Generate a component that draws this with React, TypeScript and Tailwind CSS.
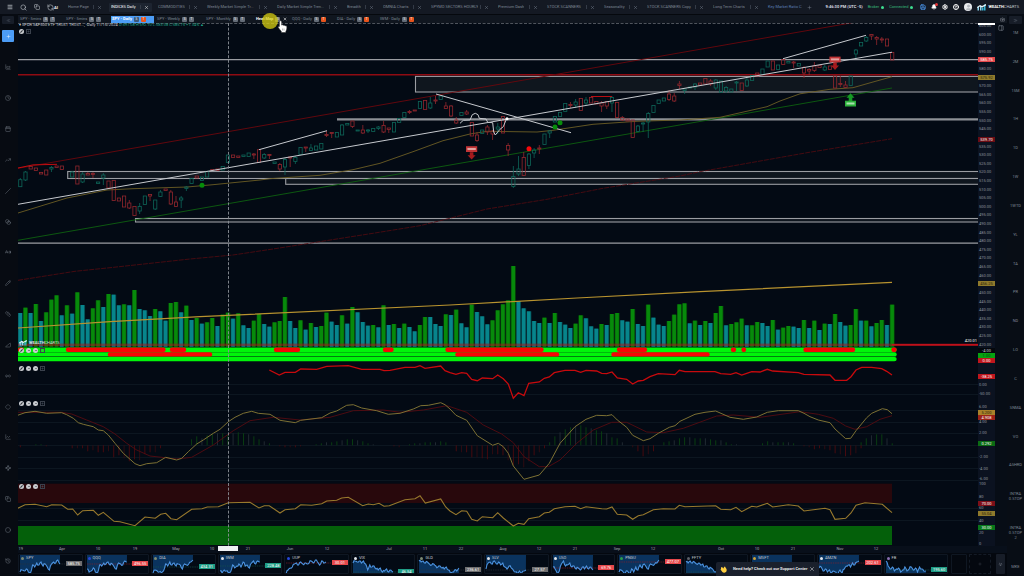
import React from 'react';
import {
  Menu, Search, Copy, RefreshCcw, X, Plus, Save, Bell, Settings, CircleHelp, User, ChevronsLeft, ChevronsRight,
  ChartArea, Clock, Calendar, TrendingUp, Slash, Blend, CaseSensitive, Pencil, Ruler, TriangleRight, Infinity as Loop, Diamond,
  ChartLine, Waypoints, Circle, History, PanelRight, Camera, ChevronsDown,
} from 'lucide-react';

type Pt = [number, number];

const STEP = 5.19;
const barX = (i: number) => 20.3 + i * STEP;

const trace = (segments: { x: number; y: number; pts: number[] }[]) =>
  segments
    .flatMap((s) => {
      const out: string[] = [];
      for (let i = 0; i < s.pts.length; i += 2) {
        out.push(`${(s.x + s.pts[i] / 3).toFixed(1)},${(s.y + s.pts[i + 1] / 3).toFixed(1)}`);
      }
      return out;
    })
    .join(' ');

/* ---------- volume: T = teal, G = green ---------- */
const VOLUME =
  '174T 158G 174T 147G 198T 172G 134G 121G 181T 151G 176T 112G 150T 193T 160G 136G 156T 117G 119T 151T 148G 151T 105G 162T 166T 183T 162G 169T 197T 144G 141G 172T 152G 195T 189G 206T 202G 189G 213T 179G 173G 191T 175G 211T 219T 197G 177G 207T 215T 202G 198G 126G 198T 219T 196G 224T 204G 216T 213G 173G 200T 210T 181G 206T 156G 172T 201T 212T 210G 217T 151G 210T 207G 219T 206G 216T 229T 210G 186G 186T 207T 213T 178G 180T 164G 205T 217T 149G 171T 184T 208T 196G 166G 148G 136G 33G 138T 160T 169T 198T 204T 188G 204T 174G 201T 209T 219T 206G 181G 190T 214T 221T 207G 210T 177G 174G 196T 200T 162G 207T 213T 149G 188T 209T 213T 198G 179G 148G 145G 205T 197G 210T 198G 204T 174G 153G 211T 207G 202G 191G 211T 211G 201G 204T 213T 195G 224T 218G 213G 215T 219T 195G 219T 197G 225T 206G 207T 177G 201T 212T 210G 162G 197T 197G 214T 204G 195G 210T 149G'
    .split(' ')
    .map((v) => ({ top: 255 + parseInt(v, 10) / 3, teal: v.endsWith('T') }));

/* ---------- candles: index, open/close band, high, low ---------- */
const CANDLES = `0G 179.7 186.7 178 187;1G 172 180 171 181;2R 166.5 169;3R 168 170.5;4R 172.5 174;5R 170 175;6G 167.5 169 166 172;7R 166 167.5;8R 166 169.5;10G 172 177 171 177;11R 166 184;12G 174 182 172 183;13R 173.5 175 172 175;14R 173.5 174.5 172 178;15G 182 183.5;16G 175 178 173 185;17R 181 188;18R 180.5 200.5;19R 198 201;20R 196 207;21R 203 208 200 209;22R 206.5 215.5;23G 206.5 211 203 214;24G 196 204.5;25R 194.5 196 194 201;26G 200 209 200 210;27G 192 196.5 190 197;28R 189 190.5;29R 192 204 190 205;30R 202 206.5 196 207;31G 198 200 196 208;32G 187 188.5 186 191;33G 178.5 183.5;34R 176 178;35G 177 180.5;36G 171.5 177;37R 169.5 170.5;38R 169 170.5;39G 166.5 170;40G 155 162.5;41R 155 157.5;42R 156 157.5;43G 155 156.5;44G 153 156.5;45R 154 155 153 159;46R 149.7 162.3;47G 154.5 158 153 159;48R 154.5 155.5 154 159;49G 162 163.5;50R 164.5 169 163 171;51G 159.5 167 158 175;52R 157 158 157 167;53G 157.5 161.5 156 164;54G 147.5 154.5;55R 147 148 147 152;56G 148 150.5 144 151;57G 146 150;58G 143.5 149;59R 134.5 135.5 131 137;60R 132.5 133.5 132 138;61G 132.5 137;62G 125 135 124 135;63G 123.5 125;64R 121 126.5 121 128;65G 130 131;66R 130 133 125 134;67G 130 131 129 133;68G 128.5 131.5;69G 127 128.5 126 130;70R 125.5 132 121 133;71R 128 129.5 128 133;72G 122.5 132;73G 118.5 122.5;74G 112.5 117.5;75R 111.5 112.5 110 114;76R 110 111;77G 101.5 108.5;78R 100.5 109.5;79G 103 108 97 109;80R 100 101 96 104;81G 96 99.5;82R 106 108.5 102 109;83R 106 116 105 117;84R 120 123 117 124;85G 112.5 115.5;86R 112 114 110 115;87R 122.5 136;88R 135 140.5 132 142;89G 130 133.5;90R 127 132 125 135;91R 131 134 130 140;92G 127 129 123 134;93R 116.5 133;94R 145.5 150 143 156;95G 176.5 186.5 166 188;96G 169 174 156 176;97R 157.5 175.5 152 176;98G 154 165.5 153 169;99G 150 153 148 158;100R 148 149 145 154;101G 134 144.5;102G 131 133 130 138;103G 116.5 122;104G 112.5 116.5;105G 103.5 111.5;106R 104.5 105.5 102 108;107G 102 105 99 108;108R 98.5 110.5;109G 100 103 97 105;110R 97.5 103;111R 101.5 104;112R 103 106 101 112;113R 101.5 106 101 109;114G 97.5 103 96 112;115R 102.5 117.5;116R 117.5 120 116 121;117R 119 121;118R 120 137.5;119G 126 131.5 125 132;120G 123 124 122 132;121G 113.5 122 112 138;122G 105.5 112.5;123G 100 103.5;124G 98 101;125R 94 99.5 90 101;126R 96 101 93 102;127R 84 85.5 81 89;128G 89 90.5 88 94;129G 87 88;130G 84 87 83 90;131R 83 85;132R 78.5 84;133R 81 84 79 86;134G 80 88 79 90;135G 81 92.5;136G 87.5 91 86 93;137G 89 92;138G 82 83 81 91;139R 83 90.5;140G 80 86 78 87;141G 75.5 80.5;142R 73 76;143G 69 74.5;144G 61 67;145R 61 70;146G 65 69.5;147R 59.5 64.5;148G 61.5 63;149R 62 63 61 68;150G 63.5 66;151R 67.5 73 66 78;152R 69.5 71 68 75;153R 66 70.5 62 72;154R 65.5 67.5;155G 67 70 65 71;156R 66 69.5;157R 76 88;158R 83.5 84.5 76 87;159R 85 87.5 81 88;160G 76 85.5;161G 50 54 49 59;162G 42.5 46;163G 37.5 41 36 42;164R 34.5 36 34 40;165R 37.5 39 36 45;166R 39 40 37 43;167R 39 46;168R 52.5 60`
  .split(';')
  .map((row) => {
    const [id, ...v] = row.split(' ');
    const n = v.map(Number);
    return { i: parseInt(id, 10), up: id.endsWith('G'), top: n[0], bottom: n[1], high: n[2] ?? n[0], low: n[3] ?? n[1] };
  });

const AVG_FAST = '18,213 67,198 107,190 133,188.7 187,187 213,184.7 260,180 270,178.7 320,175.3 353,169.7 380,163.3 413,151.7 443,140.7 470,134 487,131.3 537,132 553,130.3 593,124.3 637,121.3 680,120 720,117.3 767,106.7 780,101 800,93.8 830,89.3 853,87.7 873,82 892,76.7';
const LOWER_BAND = '18,280.3 75,271.3 110,267.7 190,259 233,255 273,249 373,233.3 420,225.7 487,209 547,199.3 603,188.3 680,176 700,171.7 807,152.7 892,138.7';
const AVG_SLOW = '18,328 110,321.7 200,316.7 450,305 577,298 700,291.7 892,282.3';

const MOMENTUM = trace([
  { x: 0, y: 360, pts: [808, 30, 838, 45, 855, 37, 886, 37, 902, 27, 950, 28, 980, 19, 1045, 17, 1085, 28, 1140, 28, 1152, 32, 1170, 31, 1215, 22, 1245, 22, 1260, 17, 1275, 25, 1322, 18, 1335, 32] },
  { x: 450, y: 360, pts: [0, 38, 18, 43, 35, 38, 50, 40, 65, 58, 82, 62, 97, 54, 128, 56, 143, 45, 160, 56, 175, 72, 190, 115, 205, 98, 222, 107, 236, 70, 268, 66, 283, 55, 298, 51, 313, 38, 345, 31, 375, 31, 392, 37, 408, 31, 440, 33, 455, 40, 470, 41, 486, 36, 502, 54, 530, 58, 548, 72, 565, 63, 580, 61, 600, 50, 625, 41, 675, 44, 688, 31, 705, 35, 795, 35, 812, 41, 842, 43, 858, 38, 875, 45, 890, 40, 905, 35, 930, 36, 952, 28, 968, 33, 1045, 38, 1062, 43, 1140, 45, 1155, 61, 1190, 61, 1203, 50, 1218, 30, 1235, 22, 1265, 22, 1295, 26, 1310, 34, 1326, 45] },
]);

const MACD = trace([
  { x: 0, y: 360, pts: [53, 166, 75, 158, 105, 154, 140, 160, 185, 158, 200, 164, 220, 175, 235, 188, 250, 193, 280, 200, 295, 210, 310, 212, 325, 225, 345, 250, 370, 280, 405, 311, 420, 317, 440, 311, 470, 308, 497, 292, 530, 300, 545, 295, 565, 275, 590, 252, 610, 240, 640, 220, 660, 208, 685, 185, 705, 172, 730, 160, 755, 154, 775, 160, 810, 163, 840, 181, 886, 188, 902, 181, 965, 173, 990, 159, 1010, 153, 1040, 136, 1060, 134, 1085, 144, 1130, 152, 1165, 163, 1200, 160, 1240, 147, 1262, 137, 1285, 136, 1322, 128, 1335, 134] },
  { x: 450, y: 360, pts: [0, 147, 18, 166, 50, 181, 82, 227, 128, 256, 145, 250, 160, 260, 175, 280, 190, 318, 222, 358, 268, 345, 298, 310, 330, 250, 375, 200, 408, 178, 440, 166, 470, 167, 486, 164, 502, 180, 530, 202, 548, 226, 580, 242, 600, 236, 625, 220, 658, 202, 675, 197, 690, 184, 735, 163, 765, 157, 797, 153, 840, 172, 880, 178, 920, 171, 952, 157, 985, 152, 1045, 152, 1062, 160, 1080, 170, 1105, 180, 1140, 188, 1155, 207, 1187, 236, 1202, 235, 1218, 212, 1250, 173, 1265, 160, 1297, 146, 1312, 149, 1326, 161] },
]);

const SIGNAL = trace([
  { x: 0, y: 360, pts: [53, 157, 185, 157, 215, 162, 260, 180, 310, 200, 345, 222, 380, 250, 410, 270, 450, 288, 530, 297, 575, 292, 640, 255, 700, 212, 750, 182, 820, 172, 900, 180, 990, 172, 1060, 152, 1150, 150, 1200, 157, 1270, 150, 1340, 137] },
  { x: 450, y: 360, pts: [0, 140, 50, 157, 100, 195, 155, 222, 190, 248, 222, 290, 268, 320, 295, 320, 330, 300, 380, 250, 430, 210, 485, 187, 530, 187, 590, 216, 640, 218, 700, 205, 800, 168, 850, 165, 930, 172, 1050, 155, 1105, 163, 1150, 175, 1187, 198, 1215, 208, 1250, 200, 1290, 178, 1326, 167] },
]);

const RSI = trace([
  { x: 0, y: 360, pts: [53, 445, 75, 434, 105, 433, 140, 440, 155, 434, 185, 435, 203, 448, 218, 447, 233, 465, 248, 452, 280, 451, 295, 466, 310, 457, 342, 484, 360, 485, 405, 497, 435, 471, 466, 475, 482, 463, 497, 460, 513, 476, 530, 479, 575, 448, 606, 446, 622, 441, 655, 440, 685, 428, 750, 427, 777, 444, 793, 437, 808, 437, 840, 459, 855, 449, 886, 446, 902, 434, 935, 436, 965, 431, 980, 423, 1010, 421, 1025, 414, 1045, 412, 1088, 437, 1105, 432, 1120, 434, 1137, 430, 1152, 439, 1168, 437, 1215, 419, 1245, 416, 1260, 407, 1276, 429, 1322, 417, 1337, 441] },
  { x: 450, y: 360, pts: [0, 453, 18, 464, 35, 452, 50, 454, 65, 478, 82, 483, 97, 470, 128, 473, 143, 458, 160, 474, 190, 498, 205, 490, 222, 493, 236, 476, 268, 470, 283, 459, 298, 457, 313, 446, 345, 440, 375, 439, 392, 446, 408, 440, 455, 446, 470, 447, 486, 441, 502, 463, 530, 465, 548, 478, 565, 467, 580, 464, 610, 449, 640, 446, 675, 447, 688, 436, 705, 440, 797, 437, 812, 448, 842, 449, 858, 442, 875, 455, 890, 447, 905, 439, 920, 441, 952, 430, 968, 441, 1015, 434, 1045, 438, 1062, 453, 1125, 445, 1140, 449, 1155, 478, 1187, 475, 1203, 459, 1218, 436, 1245, 428, 1297, 433, 1326, 458] },
]);

const SCRIBBLE = trace([{ x: 420, y: 70, pts: [120, 160, 130, 151, 150, 150, 157, 134, 166, 130, 174, 134, 178, 145, 198, 147, 203, 157, 218, 158, 221, 186, 226, 195, 240, 178, 250, 170, 258, 150, 262, 146] }]);

/* histogram: first bar index, then heights in px (negative hangs below zero) */
const HISTOGRAM: { start: number; h: number[] }[] = [
  { start: 0, h: [-2, 0, 0, 1, 1, -1] },
  { start: 10, h: [-3, -3, -3, -6, -5, -7, -7, -6, -12, -10, -13, -16, -14, -15, -9, -7, -7, -3] },
  { start: 33, h: [6, 9, 7, 10, 11, 12, 12, 11, 12, 13, 12, 11, 9, 6, 4, 2, 0, -1, -2, -2, -2, -1] },
  { start: 57, h: [1, 2, 3, 3, 4, 5, 6, 6, 5, 4, 2, 1, 0, 0, 0, -1, -2] },
  { start: 75, h: [1, 2, 2, 3, 3, 3, 4, 3] },
  { start: 84, h: [-6, -7, -7, -12, -12, -13, -14, -9, -9, -10, -15, -20, -19, -22, -16, -10, -7, -3] },
  { start: 102, h: [3, 9, 13, 16, 18, 19, 20, 18, 17, 15, 14, 12, 8, 7, 3, 0, -2, -6, -11, -9, -6] },
  { start: 124, h: [3, 4, 5, 7, 8, 8, 7, 7, 7, 6, 5, 5, 3, 1, 1] },
  { start: 143, h: [2, 4, 3, 3, 3, 3, 2] },
  { start: 151, h: [-1, -2, -4, -3, -4, -5, -8, -9, -11, -10, -8, -3] },
  { start: 162, h: [3, 7, 10, 11, 11, 7, 2] },
];

const STRIP_ONE: Pt[] = [[18, 24], [66, 165.5], [170, 186], [274, 300], [383, 393.5], [445.5, 543.5], [617, 647], [731, 736], [741.5, 746], [803.5, 855], [891.5, 896.5]];
const STRIP_TWO: Pt[] = [[108, 212], [455.5, 559], [611.5, 709.5]];

function Signal({ x, y, up = false }: { x: number; y: number; up?: boolean }) {
  return up ? (
    <g transform={`translate(${x} ${y})`} fill="#159a25">
      <path d="M0 0l4 4.4H1.8V8h-3.6V4.400H-4z" />
      <rect x="-5.5" y="7.4" width="11" height="5.8" fill="#2bb03a" />
      <rect x="-4" y="9.2" width="8" height="2" fill="#a9e0ae" />
    </g>
  ) : (
    <g transform={`translate(${x} ${y})`} fill="#a51a1d">
      <rect x="-5.6" y="0" width="11.2" height="5.8" fill="#c03436" />
      <rect x="-4.2" y="1.8" width="8.4" height="2" fill="#e3a3a1" />
      <path d="M0 13.4L4 9H1.8V6h-3.6v3H-4z" />
    </g>
  );
}

function MarketChart() {
  return (
    <svg className="block h-full w-full" viewBox="18 23 960 523" preserveAspectRatio="none" role="img" aria-label="SPY daily chart">
      <g stroke="#0c1620">
        {[384, 394, 410, 422, 433, 445, 457, 468, 480, 508, 520].map((y) => (
          <line key={y} x1="18" x2="978" y1={y + 0.5} y2={y + 0.5} />
        ))}
      </g>
      <g fill="#0f161e" stroke="#9b9da2" strokeWidth="1.1">
        <rect x="415.5" y="76.4" width="570" height="15.6" />
        <rect x="67.7" y="171.5" width="920" height="7" />
        <rect x="285.7" y="178.5" width="700" height="5.8" />
        <rect x="135.5" y="218.5" width="850" height="3.5" />
      </g>
      <g stroke="#9b9da2" strokeWidth="1.3">
        <line x1="18" x2="978" y1="59.7" y2="59.7" />
        <line x1="18" x2="978" y1="243.2" y2="243.2" />
        <line x1="337" x2="978" y1="119.4" y2="119.4" strokeWidth="2.2" stroke="#8d9095" />
      </g>
      <line x1="18" x2="978" y1="74.8" y2="74.8" stroke="#8f0b12" strokeWidth="1.4" />

      <g fill="none">
        <line x1="18" y1="168.3" x2="853" y2="22.6" stroke="#6b070c" strokeWidth="0.9" />
        <polyline points="18,168 33,164.9 57,164.3" stroke="#c40d10" />
        <line x1="18" y1="240.3" x2="892" y2="88" stroke="#0d6010" strokeWidth="0.9" />
        <polyline points={LOWER_BAND} stroke="#560a10" strokeWidth="0.8" strokeDasharray="5 1" />
        <polyline points={AVG_FAST} stroke="#6c5e25" strokeWidth="0.9" />
      </g>

      <g>
        {CANDLES.map((c) => {
          const x = barX(c.i);
          const color = c.up ? '#0e6659' : '#93272d';
          const h = Math.max(1, c.bottom - c.top);
          return (
            <g key={c.i} stroke={color} strokeWidth="0.8" fill="none">
              <line x1={x} x2={x} y1={c.high} y2={c.top} />
              <rect x={x - 1.6} y={c.top} width="3.2" height={h} />
              <line x1={x} x2={x} y1={c.bottom} y2={c.low} />
            </g>
          );
        })}
      </g>

      <g stroke="#c6c9ce" fill="none" strokeWidth="1">
        <line x1="18" y1="204.3" x2="892" y2="52.2" />
        <line x1="259" y1="149.7" x2="327" y2="130.7" />
        <line x1="436" y1="94" x2="571" y2="132.7" />
        <line x1="783" y1="58.7" x2="866" y2="35.3" />
        <polyline points={SCRIBBLE} />
      </g>
      <line x1="591" x2="612" y1="96.5" y2="96.5" stroke="#b80d12" />
      <circle cx="507" cy="118.7" r="1.5" fill="#fff" />
      <circle cx="529" cy="148.7" r="2.5" fill="#f5080b" />
      <circle cx="555" cy="127" r="2.5" fill="#068d0a" />
      <circle cx="560" cy="122.7" r="2.5" fill="#068d0a" />
      <circle cx="202" cy="185.3" r="2.5" fill="#068d0a" />
      <Signal x={471.6} y={146.2} />
      <Signal x={835} y={56.6} />
      <Signal x={850.5} y={93.3} up />

      <g>
        {VOLUME.map((v, i) => (
          <g key={i}>
            <rect x={barX(i) - 2.5} y={v.top} width="5" height={346.7 - v.top} fill={v.teal ? '#063f46' : '#064309'} />
            <rect x={barX(i) - 1.9} y={v.top} width="3.6" height={346.7 - v.top} fill={v.teal ? '#07858c' : '#078a0b'} />
          </g>
        ))}
      </g>
      <polyline points={AVG_SLOW} fill="none" stroke="#b8932f" strokeWidth="1.2" />
      <rect x="18" y="343.6" width="960" height="2.4" fill="#a4161c" fillOpacity="0.55" />
      <rect x="892" y="344" width="86" height="1.6" fill="#c0101a" />

      <g strokeWidth="4.4" strokeLinecap="round">
        {[349.7, 354.4, 359.1].map((y) => (
          <line key={y} x1="18" x2="894.5" y1={y} y2={y} stroke="#00f50a" />
        ))}
        {STRIP_ONE.map(([a, b]) => (
          <line key={a} x1={a + 2} x2={b - 2} y1="349.7" y2="349.7" stroke="#f80404" />
        ))}
        {STRIP_TWO.map(([a, b]) => (
          <line key={a} x1={a + 2} x2={b - 2} y1="354.4" y2="354.4" stroke="#f80404" />
        ))}
      </g>

      <polyline points={MOMENTUM} fill="none" stroke="#c70a0d" strokeWidth="1.3" />

      <g strokeWidth="0.8">
        {HISTOGRAM.flatMap((run) =>
          run.h.map((h, k) => (
            <line
              key={`${run.start}-${k}`}
              x1={barX(run.start + k)}
              x2={barX(run.start + k)}
              y1="445.3"
              y2={445.3 - h}
              stroke={h < 0 ? (k % 3 === 1 ? '#3a0c12' : '#580a0e') : k % 3 === 2 ? '#28323a' : '#0b4a10'}
            />
          )),
        )}
      </g>
      <polyline points={SIGNAL} fill="none" stroke="#560b11" strokeWidth="0.9" />
      <polyline points={MACD} fill="none" stroke="#7c7033" strokeWidth="1" />

      <rect x="18" y="483.7" width="874" height="19.3" fill="#28080c" />
      <rect x="18" y="526" width="874" height="19" fill="#04600a" />
      <polyline points={RSI} fill="none" stroke="#98792d" strokeWidth="1.1" />

      <line x1="18" x2="978" y1="23.3" y2="23.3" stroke="#7b8087" strokeWidth="0.8" strokeDasharray="3 1.6" />
      <line x1="228.5" x2="228.5" y1="23" y2="546" stroke="#8b9096" strokeWidth="0.9" strokeDasharray="3 1.6" />
    </svg>
  );
}

/* ---------- price axis ---------- */
type AxisMark = { y: number; text: string; tone?: string };
const LADDER: AxisMark[] = Array.from({ length: 38 }, (_, k) => ({ y: 26 + k * 8.61, text: `${605 - k * 5}.00` }));
const PANE_MARKS: AxisMark[] = [
  { y: 384.5, text: '0.00' }, { y: 394, text: '-50.00' }, { y: 407, text: '6.00' }, { y: 422, text: '4.00' }, { y: 433, text: '2.00' },
  { y: 457, text: '-2.00' }, { y: 468.5, text: '-4.00' }, { y: 479, text: '-6.00' }, { y: 484, text: '100' }, { y: 496.5, text: '80' },
  { y: 508, text: '60' }, { y: 520.5, text: '40' }, { y: 532.5, text: '20' }, { y: 544, text: '0' },
];
const TAGS: AxisMark[] = [
  { y: 59, text: '585.75', tone: 'bg-[#e5484b] text-white' },
  { y: 76.7, text: '575.92', tone: 'bg-[#8f7a2c] text-[#2a230a]' },
  { y: 138.5, text: '539.70', tone: 'bg-[#6b0d14] text-white' },
  { y: 282.5, text: '456.25', tone: 'bg-[#8f7a2c] text-[#2a230a]' },
  { y: 349.5, text: '-4.00', tone: 'bg-[#04070c] text-[#c4c7cc]' },
  { y: 354.5, text: '1.00', tone: 'bg-[#07a211] text-[#06480a]' },
  { y: 359.5, text: '0.00', tone: 'bg-[#c0161d] text-white' },
  { y: 375.5, text: '-38.25', tone: 'bg-[#c0161d] text-white' },
  { y: 412, text: '5.200', tone: 'bg-[#a8812a] text-[#2a230a]' },
  { y: 417, text: '4.908', tone: 'bg-[#9c2218] text-white' },
  { y: 442.8, text: '0.292', tone: 'bg-[#0b6b13] text-white' },
  { y: 502.5, text: '70.00', tone: 'bg-[#7d0f18] text-white' },
  { y: 513, text: '55.04', tone: 'bg-[#8f7a2c] text-[#2a230a]' },
  { y: 526.5, text: '30.00', tone: 'bg-[#08771a] text-white' },
];
const pct = (y: number) => `${((y - 23) / 523) * 100}%`;

function PriceAxis() {
  const ladder = LADDER.filter((m) => !TAGS.some((t) => Math.abs(t.y - m.y) < 4));
  return (
    <div className="relative w-[17px] shrink-0 overflow-hidden bg-[#0b1220]">
      {[...ladder, ...PANE_MARKS].map((m, i) => (
        <span key={i} className="absolute left-[1px] -mt-[2px] h-[4px] text-[4px] leading-[4px] text-[#8d939d]" style={{ top: pct(m.y) }}>
          {m.text}
        </span>
      ))}
      {TAGS.map((m) => (
        <span
          key={m.y}
          className={`absolute inset-x-0 -mt-[2px] h-[5px] text-center text-[4px] leading-[5px] ${m.tone}`}
          style={{ top: pct(m.y) }}
        >
          {m.text}
        </span>
      ))}
      <span className="absolute inset-x-0 top-0 h-[2px] bg-white" />
    </div>
  );
}

/* ---------- time axis ---------- */
const DATES: [number, string][] = [
  [20.7, '19'], [62, 'Apr'], [98, '10'], [135, '19'], [176, 'May'], [212, '10'], [248, '21'], [290, 'Jun'], [327, '12'], [389, 'Jul'], [425, '11'],
  [461, '22'], [503, 'Aug'], [539, '12'], [575, '21'], [617, 'Sep'], [653, '12'], [721, 'Oct'], [757, '10'], [793, '21'], [840, 'Nov'], [876, '12'],
];

function TimeAxis() {
  return (
    <div className="relative h-[7px] shrink-0 bg-[#080f1a]">
      {DATES.map(([x, label]) => (
        <span
          key={x}
          className="absolute top-[1px] w-[10px] -translate-x-[5px] text-center text-[4px] leading-[4px] text-[#a6abb3]"
          style={{ left: `${((x - 18) / 989) * 100}%` }}
        >
          {label}
        </span>
      ))}
      <span className="absolute top-0 h-[5px] w-[20px] -translate-x-[10px] bg-[#eef0f3]" style={{ left: `${(210 / 989) * 100}%` }} />
    </div>
  );
}

/* ---------- header ---------- */
const WORKSPACES: { name: string; w: string }[] = [
  { name: 'Home Page', w: 'w-[43px]' }, { name: 'INDICES Daily', w: 'w-[47px]' }, { name: 'COMMODITIES', w: 'w-[49px]' },
  { name: 'Weekly Market Simple Tr...', w: 'w-[70px]' }, { name: 'Daily Market Simple Tren...', w: 'w-[70px]' }, { name: 'Breadth', w: 'w-[36px]' },
  { name: 'OMNIA Charts', w: 'w-[48px]' }, { name: 'SPYMO SECTORS HOURLY', w: 'w-[67px]' }, { name: 'Premium Dash', w: 'w-[49px]' },
  { name: 'STOCK SCANNERS', w: 'w-[57px]' }, { name: 'Seasonality', w: 'w-[43px]' }, { name: 'STOCK SCANNERS Copy', w: 'w-[66px]' },
  { name: 'Long Term Charts', w: 'w-[55px]' },
];

function LogoMark({ className }: { className: string }) {
  return (
    <svg className={className} viewBox="0 0 18 14" aria-hidden="true">
      <path d="M1 6h3v7H1zM6 4h3v9H6z" fill="#8fd6ef" />
      <path d="M10 7h3v6h-3zM14 1h3v12h-3z" fill="#35b7d8" />
      <path d="M0 6l6-4 4 2 8-4v3l-8 4-4-2-6 3z" fill="#e8f6fb" />
    </svg>
  );
}

function Header() {
  return (
    <header className="flex h-[14px] shrink-0 items-center bg-[#141923] text-[4px] leading-[6px] text-[#7d8694]">
      <div className="flex w-[66px] shrink-0 items-center gap-[7px] pl-[7px] text-[#c3c8cf]">
        <button aria-label="Menu"><Menu className="size-[6px]" strokeWidth={3} /></button>
        <button aria-label="Search"><Search className="size-[7px]" /></button>
        <button aria-label="Copy layout"><Copy className="size-[6px]" /></button>
        <button aria-label="AI assistant" className="flex items-end"><RefreshCcw className="size-[7px]" /><span className="font-bold text-white">AI</span></button>
      </div>
      <nav className="flex min-w-0 items-center" aria-label="Workspaces">
        {WORKSPACES.map((t, i) => (
          <div key={i} className={`${t.w} flex shrink-0`}>
            <div className={`mr-[4px] flex h-[9px] min-w-0 flex-1 items-center rounded-[1px] pr-[3px] pl-[2px] ${i === 1 ? 'bg-[#1d2430] text-white' : ''}`}>
              <button className="truncate">{t.name}</button>
              <span className="mr-[3px] ml-auto h-[4px] w-px bg-[#343b47]" />
              <button aria-label={`Close ${t.name}`}><X className="size-[5px]" /></button>
            </div>
          </div>
        ))}
        <button className="shrink-0 pl-[2px] text-[#5b7fb5]">Key Market Ratio C</button>
        <button aria-label="Add workspace" className="ml-[5px] shrink-0"><Plus className="size-[5px]" /></button>
      </nav>
      <div className="ml-auto flex shrink-0 items-center gap-[5px] whitespace-nowrap pr-[5px]">
        <span className="font-bold text-[#d9dce1]">9:46:30 PM (UTC -5)</span>
        <span className="flex items-center gap-[2px] text-[#38b97c]">Broker<i className="size-[3px] rounded-full bg-[#3ddc8f]" /></span>
        <span className="flex items-center gap-[2px] text-[#38b97c]">Connected<i className="size-[3px] rounded-full bg-[#3ddc8f]" /></span>
        <button aria-label="Save" className="ml-[2px] text-[#4d9bf5]"><Save className="size-[6px]" strokeWidth={3} /></button>
        <button aria-label="Notifications" className="relative text-white">
          <Bell className="size-[6px]" fill="currentColor" />
          <i className="absolute -top-px -right-px size-[3px] rounded-full bg-[#e5383b]" />
        </button>
        <button aria-label="Settings" className="text-white"><Settings className="size-[6px]" strokeWidth={4} /></button>
        <button aria-label="Help" className="text-white"><CircleHelp className="size-[6px]" strokeWidth={4} /></button>
        <button aria-label="Account" className="flex size-[8px] items-end justify-center overflow-hidden rounded-full bg-[#e9ebee] text-[#b3b8bf]">
          <User className="size-[7px]" fill="currentColor" />
        </button>
        <a href="#home" className="flex items-center gap-[2px] text-[#c5c9cf]">
          <LogoMark className="h-[7px] w-[9px]" />
          <span><b className="text-white">WEALTH</b>CHARTS</span>
        </a>
      </div>
    </header>
  );
}

/* ---------- chart tabs ---------- */
const CHART_TABS: { name: string; w: string; kind: 'plain' | 'active' | 'hover' | 'alert' }[] = [
  { name: 'SPY - 5mins', w: 'w-[46px]', kind: 'plain' },
  { name: 'SPY - 5mins', w: 'w-[46px]', kind: 'plain' },
  { name: 'SPY - Daily', w: 'w-[45px]', kind: 'active' },
  { name: 'SPY - Weekly', w: 'w-[49px]', kind: 'plain' },
  { name: 'SPY - Monthly', w: 'w-[50px]', kind: 'plain' },
  { name: 'Heat Map', w: 'w-[36px]', kind: 'hover' },
  { name: 'QQQ - Daily', w: 'w-[45px]', kind: 'alert' },
  { name: 'DIA - Daily', w: 'w-[43px]', kind: 'alert' },
  { name: 'IWM - Daily', w: 'w-[46px]', kind: 'alert' },
];

function ChartTabs() {
  return (
    <div className="flex h-[9px] shrink-0 items-center border-t border-[#05080d] bg-[#10161f] pl-px text-[4px] leading-[6px] text-[#7d8694]">
      {CHART_TABS.map((t, i) => {
        const active = t.kind === 'active';
        return (
          <div key={i} className={`${t.w} flex shrink-0`}>
            <div className={`flex h-[7px] items-center gap-[2px] whitespace-nowrap px-px ${active ? 'w-[43px] bg-[#4c9cf5] text-white' : ''}`}>
              <button className={active || t.kind === 'hover' ? 'font-bold text-white' : ''}>{t.name}</button>
              <button aria-label="Settings" className={`flex size-[5px] items-center justify-center rounded-[1px] text-[3px] leading-[5px] text-white ${active ? 'bg-[#3c5878]' : 'bg-[#646c77]'}`}>S</button>
              {t.kind === 'hover' ? (
                <button aria-label="Close Heat Map" className="ml-px text-white"><X className="size-[4px]" strokeWidth={3} /></button>
              ) : (
                <button aria-label="Alerts" className={`flex size-[5px] items-center justify-center rounded-[1px] text-[3px] leading-[5px] text-white ${t.kind === 'plain' ? 'bg-[#646c77]' : 'bg-[#e8541c]'}`}>T</button>
              )}
            </div>
          </div>
        );
      })}
      <button aria-label="Snapshot" className="ml-auto mr-[2px] text-[#aab0b9]"><Camera className="size-[5px]" /></button>
    </div>
  );
}

/* ---------- side rails ---------- */
const TOOLS = [
  ['Indicators', ChartArea], ['Sessions', Clock], ['Calendar', Calendar], ['Trend', TrendingUp], ['Line', Slash], ['Shapes', Blend], ['Text', CaseSensitive],
  ['Pencil', Pencil], ['Ruler', Ruler], ['Angle', TriangleRight], ['Cycle', Loop], ['Marker', Diamond], ['Study', ChartLine], ['Path', Waypoints],
  ['Duplicate', Copy], ['Ellipse', Circle], ['Replay', History],
] as const;

function ToolRail() {
  return (
    <aside className="flex w-[18px] shrink-0 flex-col items-start bg-[#070b12] pt-[2px] text-[#68707b]">
      <button aria-label="Collapse" className="ml-[2px] flex h-[8px] w-[12px] shrink-0 items-center justify-center rounded-[1px] bg-[#171d28]"><ChevronsLeft className="size-[5px]" /></button>
      <button aria-label="Add chart" className="mt-[6px] mb-[10px] ml-[2px] flex h-[12px] w-[12px] shrink-0 items-center justify-center rounded-[1px] bg-[#4c9cf5] text-white"><Plus className="size-[5px]" /></button>
      {TOOLS.map(([name, Icon]) => (
        <button key={name} aria-label={name} className="flex min-h-0 w-[16px] flex-[0_1_31px] items-center justify-center"><Icon className="size-[6px]" /></button>
      ))}
    </aside>
  );
}

const PERIODS = ['1M', '2M', '15M', '1H', '1D', '1W', '1WTD', 'YL', 'TA', 'PR', 'ND', 'LO', 'C', 'SNMA', 'VO', 'ASHRD', 'INTRA\n0.STOP', 'INTRA\n0.STOP\n2', 'MKE'];

function PeriodRail() {
  return (
    <aside className="flex w-[17px] shrink-0 flex-col items-center bg-[#080d15] pt-[2px] text-[4px] leading-[5px] text-[#7d8694]">
      <button aria-label="Expand" className="flex h-[8px] w-[13px] shrink-0 items-center justify-center rounded-[1px] bg-[#171d28]"><ChevronsRight className="size-[5px]" /></button>
      <nav aria-label="Periods" className="flex min-h-0 w-full flex-1 flex-col items-center justify-between pt-[6px] pb-[7px]">
        {PERIODS.map((p) => (
          <button key={p} className="w-full text-center whitespace-pre">{p}</button>
        ))}
      </nav>
    </aside>
  );
}

/* ---------- watch list ---------- */
type Quote = { name: string; price?: string; tone: string; dot: string; y: number; fill: 'above' | 'below' | 'none'; line: number[] };
const GREY = 'bg-[#6f6f70]';
const RED = 'bg-[#e5484b]';
const TEAL = 'bg-[#1f9d86]';
const QUOTES: Quote[] = [
  { name: 'SPY', price: '585.75', tone: GREY, dot: 'bg-[#7d8a72]', y: 9, fill: 'above', line: [17, 15, 16, 14, 17, 18, 10, 12, 8, 10, 7, 11, 9, 12, 15, 9, 7, 8, 5, 9] },
  { name: 'QQQ', price: '496.55', tone: RED, dot: 'bg-[#2747d8]', y: 9, fill: 'above', line: [14, 17, 16, 13, 17, 18, 10, 11, 8, 9, 7, 10, 9, 12, 14, 8, 9, 10, 6, 7] },
  { name: 'DIA', price: '434.31', tone: TEAL, dot: 'bg-[#7d8a72]', y: 12, fill: 'above', line: [18, 15, 16, 17, 18, 16, 9, 11, 7, 10, 8, 11, 9, 10, 14, 9, 10, 9, 7, 5] },
  { name: 'IWM', price: '228.48', tone: TEAL, dot: 'bg-[#dfe3e8]', y: 11, fill: 'above', line: [16, 18, 15, 16, 18, 17, 10, 13, 11, 9, 12, 7, 11, 10, 13, 8, 6, 9, 6, 7] },
  { name: 'UUP', price: '30.01', tone: RED, dot: 'bg-[#2747d8]', y: 8, fill: 'none', line: [19, 15, 13, 12, 9, 8, 10, 7, 9, 8, 9, 8, 6, 8, 5, 7, 10, 6, 8, 7] },
  { name: 'VIX', price: '46.54', tone: TEAL, dot: 'bg-[#dfe3e8]', y: 17, fill: 'below', line: [8, 6, 7, 6, 8, 6, 9, 15, 10, 12, 11, 14, 15, 13, 17, 16, 14, 17, 15, 17] },
  { name: 'GLD', price: '236.61', tone: GREY, dot: 'bg-[#7d8a72]', y: 15, fill: 'below', line: [6, 7, 6, 8, 7, 9, 10, 9, 11, 12, 11, 13, 14, 12, 15, 18, 17, 15, 16, 13] },
  { name: 'SLV', price: '27.57', tone: GREY, dot: 'bg-[#dfe3e8]', y: 15, fill: 'above', line: [14, 8, 7, 9, 6, 9, 7, 10, 8, 12, 14, 11, 13, 15, 17, 19, 16, 18, 16, 15] },
  { name: 'USO', price: '69.76', tone: RED, dot: 'bg-[#dfe3e8]', y: 13, fill: 'above', line: [12, 14, 18, 16, 9, 6, 11, 10, 8, 12, 11, 14, 13, 15, 12, 14, 11, 14, 12, 15] },
  { name: 'PNGU', price: '477.07', tone: RED, dot: 'bg-[#2b9c4a]', y: 7, fill: 'above', line: [17, 15, 17, 18, 16, 19, 14, 17, 12, 15, 10, 13, 9, 12, 14, 9, 10, 9, 8, 5] },
  { name: 'FFTY', tone: TEAL, dot: 'bg-[#5c6068]', y: 17, fill: 'below', line: [7, 8, 6, 8, 7, 9, 8, 10, 9, 12, 11, 14, 13, 15, 17, 18, 17, 18, 19, 19] },
  { name: 'MSFT', tone: RED, dot: 'bg-[#c9a03a]', y: 12, fill: 'above', line: [12, 15, 17, 16, 13, 17, 18, 16, 15, 17, 14, 16, 13, 14, 15, 12, 14, 13, 12, 13] },
  { name: 'AMZN', price: '202.61', tone: RED, dot: 'bg-[#dfe3e8]', y: 8, fill: 'above', line: [13, 12, 16, 14, 17, 15, 18, 16, 17, 19, 15, 18, 14, 11, 10, 12, 8, 10, 7, 6] },
  { name: 'FB', price: '195.60', tone: TEAL, dot: 'bg-[#8a6fb0]', y: 15, fill: 'below', line: [6, 11, 14, 12, 16, 14, 13, 17, 15, 12, 16, 14, 12, 15, 13, 17, 12, 14, 16, 16] },
];

function QuoteCard({ q }: { q: Quote }) {
  const jitter = (k: number) => ((k * 37) % 11) / 4 - 1.3;
  const pts: string[] = [];
  q.line.forEach((y, k) => {
    const x = 1 + k * 2.1;
    pts.push(`${x},${y}`);
    const next = q.line[k + 1];
    if (next !== undefined) pts.push(`${x + 1},${((y + next) / 2 + jitter(k)).toFixed(1)}`);
  });
  const base = q.fill === 'above' ? 0 : 20;
  const stroke = q.tone === RED ? '#8e2026' : q.tone === TEAL ? '#17564e' : '#2d333b';
  return (
    <a href={`#${q.name}`} className="relative block h-[20px] min-w-0 flex-1 overflow-hidden rounded-[1px] border border-[#0f1722] bg-[#030a14]">
      <svg className="absolute inset-0 h-[20px] w-[62px]" viewBox="0 0 62 20" preserveAspectRatio="none" aria-hidden="true">
        {q.fill !== 'none' && <polygon points={`1,${base} ${pts.join(' ')} 41,${base}`} fill="#0a335e" />}
        <line x1="1" x2="62" y1={q.y} y2={q.y} stroke={stroke} strokeWidth="0.6" strokeDasharray="1.5 0.8" />
        <polyline points={pts.join(' ')} fill="none" stroke="#4c93e0" strokeWidth="1.1" />
      </svg>
      <span className="absolute top-px left-[2px] flex items-center gap-[2px] text-[4px] leading-[4px] text-[#c6cad1]">
        <i className={`size-[3px] rounded-full ${q.dot}`} />
        {q.name}
      </span>
      {q.price && (
        <span className={`absolute right-0 -mt-[3px] h-[5px] w-[16px] text-center text-[4px] leading-[5px] text-white ${q.tone}`} style={{ top: `${q.y}px` }}>
          {q.price}
        </span>
      )}
    </a>
  );
}

function WatchList() {
  return (
    <div className="flex h-[23px] shrink-0 items-start gap-[2px] bg-[#04080f] pt-px">
      <div className="flex min-w-0 flex-1 gap-[2px]">
        {QUOTES.map((q) => <QuoteCard key={q.name} q={q} />)}
      </div>
      <div className="ml-px h-[20px] w-[16px] rounded-[1px] border border-[#0f1722]" />
      <button aria-label="Add symbol" className="flex h-[20px] w-[22px] items-center justify-center rounded-[1px] border border-dashed border-[#141b26] text-[#4b535f]"><Plus className="size-[4px]" /></button>
      <button aria-label="Collapse watch list" className="mr-[2px] ml-[3px] flex h-[20px] w-[9px] items-center justify-center rounded-[1px] bg-[#171d28] text-[#aab0b9]"><ChevronsDown className="size-[5px]" /></button>
    </div>
  );
}

function PaneControls({ top, count = 3 }: { top: number; count?: number }) {
  return (
    <div className="absolute left-px flex items-center gap-[2px]" style={{ top: pct(top) }}>
      {Array.from({ length: count }, (_, i) => (
        <button key={i} aria-label={['Hide', 'Settings', 'Remove'][i]} className="flex size-[5px] items-center justify-center rounded-full bg-[#c9ccd0]">
          <i className={i === 0 ? 'h-px w-[3px] -rotate-45 bg-[#30353c]' : 'h-px w-[2px] bg-[#7b8088]'} />
        </button>
      ))}
      <button aria-label="Expand pane" className="flex size-[5px] items-center justify-center border border-[#3a414c] text-[#7d8694]"><Plus className="size-[3px]" /></button>
    </div>
  );
}

export default function App() {
  return (
    <div className="relative flex h-screen flex-col overflow-hidden bg-[#030a14] font-['Roboto','Liberation_Sans',sans-serif]">
      <Header />
      <div className="flex min-h-0 flex-1">
        <ToolRail />
        <main className="flex min-w-0 flex-1 flex-col">
          <ChartTabs />
          <section className="flex min-h-0 flex-1">
            <div className="relative min-w-0 flex-1">
              <MarketChart />
              <p className="absolute top-0 left-px text-[4px] leading-[4px] whitespace-nowrap text-[#c9cdd3]">
                ▾ SPDR S&amp;P500 ETF TRUST TRUST..., -Daily 11/15/2024{' '}
                <span className="text-[#1fa287]">O:591.08 H:592.10 L:583.08 C:585.75 +1.34% ▲</span>
              </p>
              <PaneControls top={29} count={1} />
              <PaneControls top={348} />
              <PaneControls top={366} />
              <PaneControls top={401} />
              <PaneControls top={484} />
              <div className="absolute left-px flex items-center gap-[2px] text-[4px] leading-[4px] text-[#d7dade]" style={{ top: pct(340) }}>
                <LogoMark className="h-[6px] w-[8px]" />
                <span><b>WEALTH</b>CHARTS</span>
              </div>
              <span className="absolute right-px text-[4px] leading-[4px] text-white" style={{ top: pct(339) }}>420.01</span>
            </div>
            <PriceAxis />
            <div className="flex w-[12px] shrink-0 justify-center bg-[#070d16] pt-[2px] text-[#8a919c]">
              <button aria-label="Toggle panel" className="h-[6px]"><PanelRight className="size-[6px]" /></button>
            </div>
          </section>
          <TimeAxis />
          <WatchList />
        </main>
        <PeriodRail />
      </div>

      <div className="pointer-events-none absolute top-[13px] left-[262px] size-[16px] rounded-full bg-[#d8cf12]/75" />
      <svg className="pointer-events-none absolute top-[20px] left-[277px] h-[13px] w-[11px]" viewBox="0 0 22 26" aria-hidden="true">
        <path d="M7 1.5c1.4 0 2.3 1 2.3 2.4v6.300l1.200-.6c1.400-.4 2.300.2 2.800 1.200 1.500-.7 2.800-.2 3.300 1 1.700-.5 3.100.5 3.100 2.400 0 4.600-.7 6.400-2 8.200V25H8.600v-2.300C6.500 20.500 4.500 17.500 2.600 14.900c-.9-1.300.8-2.900 2.200-1.700V3.900C4.800 2.500 5.700 1.500 7 1.500z" fill="#fff" stroke="#222" strokeWidth="1" />
        <path d="M11 17v4M14 17v4" stroke="#777" />
      </svg>

      <div role="status" className="absolute right-[205px] bottom-0 flex h-[14px] w-[103px] items-center rounded-t-[2px] bg-[#1a202c] px-[4px] text-[4px] leading-[6px] font-bold text-[#e3e6ea]">
        <svg className="mr-[6px] size-[7px] shrink-0" viewBox="0 0 14 14" aria-hidden="true">
          <path d="M2 3l2-1 3 3 1-3 2-1 1 2 2 3c1 3 0 6-3 7s-5 0-6-2L1 7l1-1z" fill="#ffcf3f" />
        </svg>
        <span className="whitespace-nowrap">Need help? Check out our Support Center</span>
        <button aria-label="Dismiss" className="ml-auto"><X className="size-[6px]" /></button>
      </div>
    </div>
  );
}
